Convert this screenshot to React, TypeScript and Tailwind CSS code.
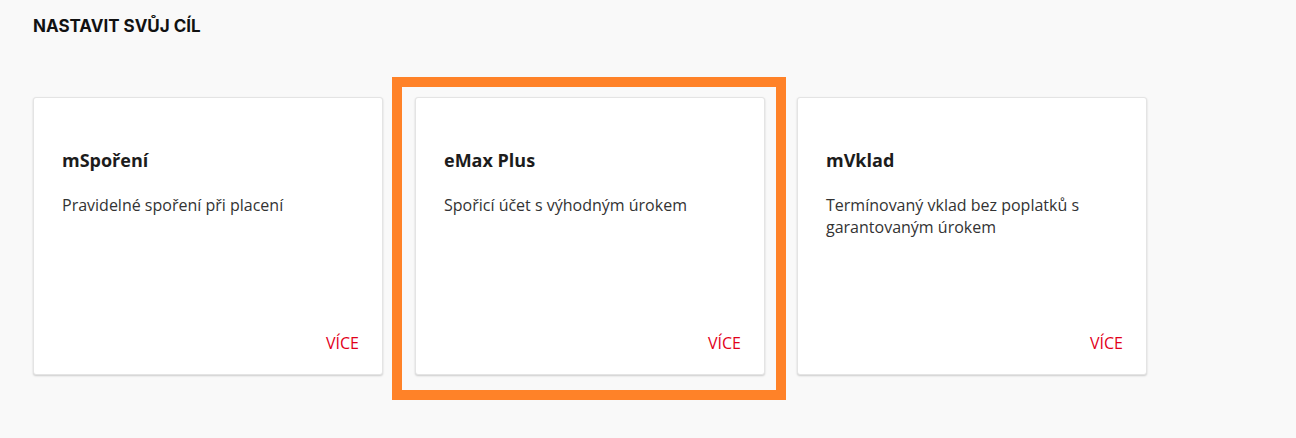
import React from "react";

type Product = {
  title: string;
  text: string;
  highlighted?: boolean;
};

const products: Product[] = [
  { title: "mSpoření", text: "Pravidelné spoření při placení" },
  { title: "eMax Plus", text: "Spořicí účet s výhodným úrokem", highlighted: true },
  { title: "mVklad", text: "Termínovaný vklad bez poplatků s garantovaným úrokem" },
];

const ProductCard: React.FC<{ product: Product }> = ({ product }) => {
  return (
    <div className="relative w-[350px] h-[278px]">
      {product.highlighted && (
        <div className="absolute -left-[23px] -top-[20px] -right-[21px] -bottom-[25px] border-[10px] border-[#ff8228] pointer-events-none" />
      )}
      <div className="relative flex flex-col h-full bg-white border border-[#e4e4e4] rounded-[3px] shadow-[0_1px_2px_rgba(0,0,0,0.18)] pl-[28px] pr-[23px] pt-[50px] pb-[20px] font-['Open_Sans',sans-serif]">
        <h3 className="text-[18px] leading-[24px] font-bold text-[#1c1c1c]">
          {product.title}
        </h3>
        <p className="mt-[22px] text-[16px] leading-[22px] text-[#333] pr-[11px] flex-1">
          {product.text}
        </p>
        <div className="flex justify-end">
          <a href="#" className="text-[16px] leading-[22px] text-[#e2001a] uppercase">
            Více
          </a>
        </div>
      </div>
    </div>
  );
};

export default function App() {
  return (
    <div className="min-h-screen bg-[#f9f9f9] px-[33px] pt-[14px]">
      <h2 className="font-['Inter',sans-serif] font-bold text-[17px] leading-[24px] text-[#111] uppercase">
        Nastavit svůj cíl
      </h2>
      <div className="flex gap-[32px] mt-[59px]">
        {products.map((p) => (
          <ProductCard key={p.title} product={p} />
        ))}
      </div>
    </div>
  );
}
